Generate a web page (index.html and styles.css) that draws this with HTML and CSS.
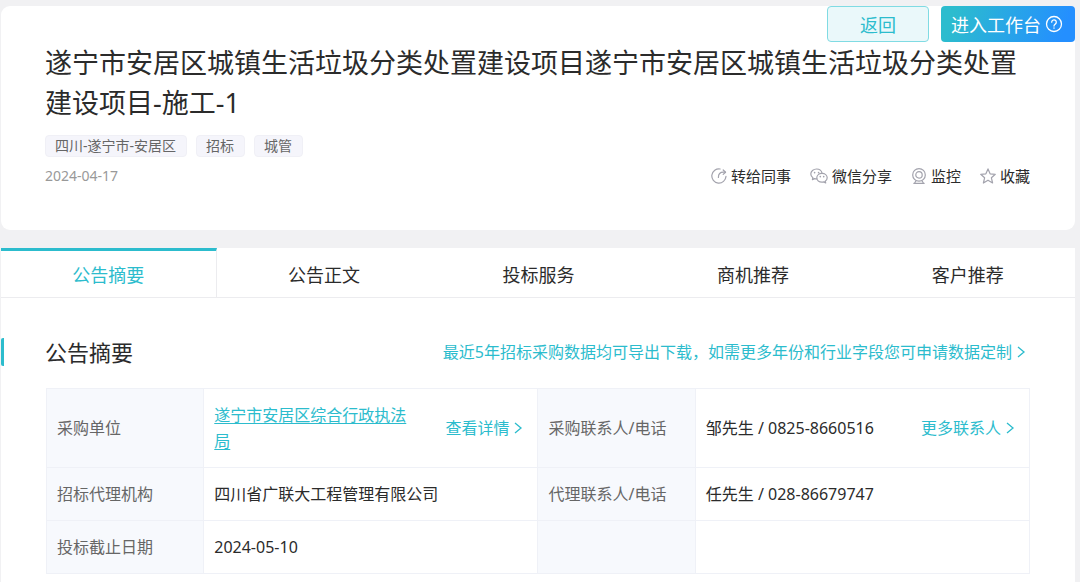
FILE: index.html
```
<!DOCTYPE html>
<html lang="zh-CN">
<head>
  <meta charset="UTF-8">
  <meta name="viewport" content="width=device-width, initial-scale=1.0">
  <title>公告摘要</title>
  <link rel="stylesheet" href="styles.css">
</head>
<body>
  <div class="page">
    <header class="card">
      <div class="top-buttons">
        <button class="btn btn-back" type="button">返回</button>
        <button class="btn btn-work" type="button">进入工作台
          <svg width="18" height="18" viewBox="0 0 18 18" fill="none" stroke="currentColor" stroke-width="1.3" stroke-linecap="round" aria-hidden="true">
            <circle cx="9" cy="9" r="7.5"/>
            <path d="M6.7 7.2a2.3 2.3 0 1 1 3.6 1.9c-.8.6-1.3 1-1.3 1.9"/>
            <path d="M9 13v.2"/>
          </svg>
        </button>
      </div>
      <div class="card-body">
        <h1>遂宁市安居区城镇生活垃圾分类处置建设项目遂宁市安居区城镇生活垃圾分类处置建设项目-施工-1</h1>
        <div class="tags">
          <span class="tag">四川-遂宁市-安居区</span>
          <span class="tag">招标</span>
          <span class="tag">城管</span>
        </div>
        <div class="info">
          <time datetime="2024-04-17">2024-04-17</time>
          <div class="actions">
            <button type="button">
              <svg width="16" height="16" viewBox="0 0 16 16" aria-hidden="true">
                <path d="M9.2 1A7.1 7.1 0 1 0 15 8.4"/>
                <path d="M7.4 9.4c0-3.3 1.8-5.2 5-5.2h2"/>
                <path d="M12.2 2l2.4 2.2-2.4 2.2"/>
              </svg>转给同事</button>
            <button type="button">
              <svg width="18" height="16" viewBox="0 0 18 16" aria-hidden="true">
                <path d="M12 5.2C11.6 2.8 9.4 1 6.6 1 3.4 1 .8 3.2.8 6c0 1.600.8 2.900 2.100 3.800l-.5 1.900 2.200-1.100c.8.3 1.400.3 2.200.3"/>
                <path d="M12 5.300c-2.900 0-5.200 2-5.200 4.500s2.300 4.400 5.200 4.400c.6 0 1.200-.1 1.800-.3l1.900 1-.5-1.700c1.300-.8 2-2 2-3.400 0-2.500-2.300-4.500-5.200-4.500z"/>
                <path d="M4.600 4.600v.2M8.600 4.600v.2M10.300 8.600v.2M13.700 8.600v.2" stroke-width="1.6"/>
              </svg>微信分享</button>
            <button type="button">
              <svg width="16" height="16" viewBox="0 0 16 16" aria-hidden="true">
                <circle cx="8" cy="6.9" r="6.300"/>
                <circle cx="8" cy="6.9" r="3.200"/>
                <path d="M5 12.800L3.600 15M11 12.800l1.400 2.200M2.800 15.300h10.400"/>
              </svg>监控</button>
            <button type="button">
              <svg width="16" height="16" viewBox="0 0 16 16" aria-hidden="true">
                <path d="M8 .9l2.100 4.900 5.200.5-3.900 3.500 1.200 5.200L8 12.200 3.400 15l1.200-5.200L.7 6.300l5.200-.5z"/>
              </svg>收藏</button>
          </div>
        </div>
      </div>
    </header>

    <main class="content">
      <nav class="tabs">
        <button class="tab active" type="button">公告摘要</button>
        <button class="tab" type="button">公告正文</button>
        <button class="tab" type="button">投标服务</button>
        <button class="tab" type="button">商机推荐</button>
        <button class="tab" type="button">客户推荐</button>
      </nav>

      <section class="summary">
        <div class="section-head">
          <h2>公告摘要</h2>
          <a class="more" href="#">最近5年招标采购数据均可导出下载，如需更多年份和行业字段您可申请数据定制<svg width="10" height="14" viewBox="0 0 10 14" aria-hidden="true"><path d="M2 2l6 5-6 5"/></svg></a>
        </div>
        <table>
          <tr>
            <th scope="row">采购单位</th>
            <td>
              <div class="cell">
                <a class="org" href="#">遂宁市安居区综合行政执法局</a>
                <a class="more" href="#">查看详情<svg width="10" height="14" viewBox="0 0 10 14" aria-hidden="true"><path d="M2 2l6 5-6 5"/></svg></a>
              </div>
            </td>
            <th scope="row">采购联系人/电话</th>
            <td>
              <div class="cell">
                <span>邹先生 / 0825-8660516</span>
                <a class="more" href="#">更多联系人<svg width="10" height="14" viewBox="0 0 10 14" aria-hidden="true"><path d="M2 2l6 5-6 5"/></svg></a>
              </div>
            </td>
          </tr>
          <tr>
            <th scope="row">招标代理机构</th>
            <td>四川省广联大工程管理有限公司</td>
            <th scope="row">代理联系人/电话</th>
            <td>任先生 / 028-86679747</td>
          </tr>
          <tr>
            <th scope="row">投标截止日期</th>
            <td>2024-05-10</td>
            <th></th>
            <td></td>
          </tr>
        </table>
      </section>
    </main>
  </div>
</body>
</html>
```
FILE: styles.css
```
* {
  box-sizing: border-box;
}
body {
  margin: 0;
  background-color: #f1f1f3;
  color: #2b2b2b;
  font-family: "Noto Sans", "Noto Sans CJK SC", sans-serif;
  font-size: 16px;
  line-height: 26px;
}
.page {
  padding: 6px 5px 0 1px;
}
h1, h2 {
  margin: 0;
  font-weight: 400;
}
button {
  font-family: inherit;
  cursor: pointer;
}
a {
  color: #2cbccd;
  text-decoration: none;
}
svg {
  flex: none;
}

/* header card */
.card {
  background-color: #fff;
  border-radius: 9px;
  padding-bottom: 41px;
}
.top-buttons {
  display: flex;
  justify-content: flex-end;
  gap: 12px;
}
.btn {
  display: flex;
  align-items: center;
  justify-content: center;
  gap: 4px;
  height: 36px;
  border-radius: 4px;
  font-size: 18px;
}
.btn-back {
  width: 102px;
  border: 1px solid #80dbe3;
  background-color: #eaf8fa;
  color: #2cbccd;
}
.btn-work {
  padding: 0 12px 0 10px;
  border: none;
  background: linear-gradient(110deg, #2cbcce 10%, #248fff 90%);
  color: #fff;
}
.card-body {
  padding: 1px 45px 0 44px;
}
h1 {
  font-size: 27px;
  line-height: 40px;
}
.tags {
  display: flex;
  gap: 9px;
  margin-top: 12px;
}
.tag {
  padding: 0 10px 0 9px;
  border: 1px solid #f0f0f6;
  border-radius: 4px;
  background-color: #f5f5fb;
  color: #666;
  font-size: 14px;
  line-height: 20px;
}
.info {
  display: flex;
  justify-content: space-between;
  align-items: center;
  margin-top: 6px;
}
.info time {
  color: #999;
  font-size: 14px;
}
.actions {
  display: flex;
  gap: 19px;
}
.actions button {
  display: flex;
  align-items: center;
  gap: 4px;
  padding: 0;
  border: none;
  background: none;
  color: #2b2b2b;
  font-size: 15px;
  line-height: 26px;
}
.actions svg {
  fill: none;
  stroke: #a3a3ad;
  stroke-width: 1.2;
  stroke-linecap: round;
  stroke-linejoin: round;
}

/* tabs */
.content {
  margin-top: 18px;
  background-color: #fff;
}
.tabs {
  display: flex;
}
.tab {
  flex: 1;
  height: 50px;
  padding: 0;
  border: none;
  border-top: 3px solid transparent;
  border-bottom: 1px solid #ececef;
  background: none;
  color: #2b2b2b;
  font-size: 18px;
}
.tab.active {
  border-top-color: #2cbccd;
  border-right: 1px solid #ececef;
  color: #2cbccd;
}

/* summary */
.summary {
  padding: 40px 45px 16px 0;
}
.section-head {
  display: flex;
  justify-content: space-between;
  align-items: center;
  border-left: 3px solid #2cbccd;
  border-radius: 2px;
  padding: 0 4px 0 41px;
}
h2 {
  font-size: 22px;
  line-height: 28px;
}
.more {
  display: flex;
  align-items: center;
  gap: 4px;
  white-space: nowrap;
}
.more svg {
  fill: none;
  stroke: #2cbccd;
  stroke-width: 1.3;
}
table {
  width: calc(100% - 45px);
  margin: 22px 0 0 45px;
  table-layout: fixed;
  border-collapse: collapse;
}
th, td {
  width: 34%;
  padding: 13px 10px;
  border: 1px solid #eff1f7;
  text-align: left;
}
th {
  width: 16%;
  background-color: #f7f9fd;
  color: #666;
  font-weight: 400;
}
.cell {
  display: flex;
  justify-content: space-between;
  align-items: center;
  gap: 30px;
  padding-right: 4px;
}
.org {
  text-decoration: underline;
  text-underline-offset: 2px;
}
```
